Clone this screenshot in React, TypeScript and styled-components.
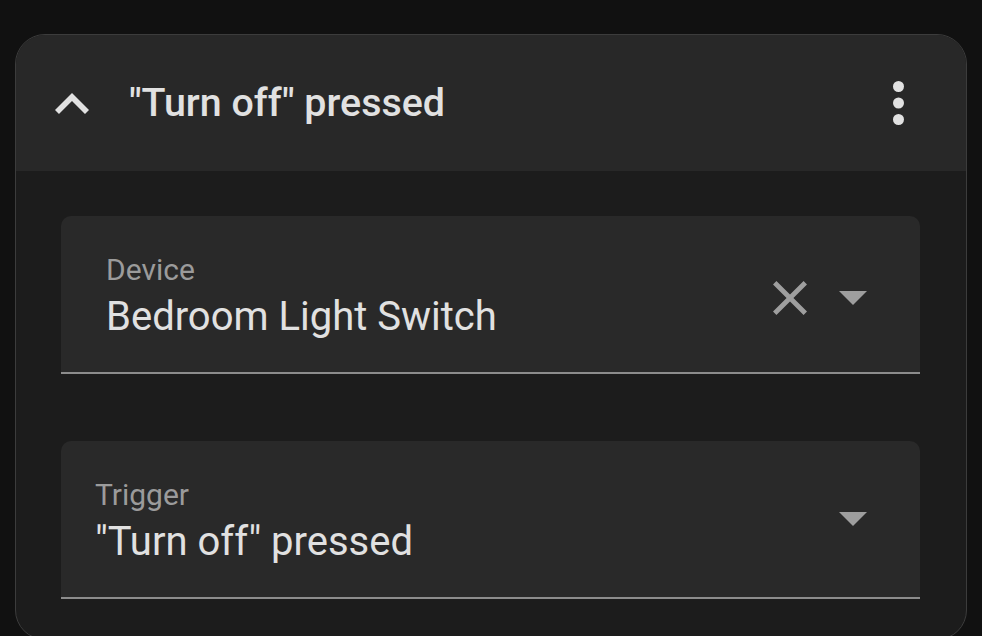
import React from "react";
import styled, { createGlobalStyle } from "styled-components";

const Global = createGlobalStyle`
  html, body {
    margin: 0;
    padding: 0;
    background: #111111;
    font-family: Roboto, "Noto Sans", sans-serif;
    overflow: hidden;
  }
`;

const Page = styled.div`
  width: 982px;
  height: 636px;
  padding: 34px 0 0 15px;
  box-sizing: border-box;
`;

const Card = styled.div`
  width: 952px;
  height: 606px;
  box-sizing: border-box;
  border: 1px solid #3c3c3c;
  border-radius: 30px;
  background: #1c1c1c;
  overflow: hidden;
  display: flex;
  flex-direction: column;
`;

const Header = styled.div`
  height: 136px;
  flex: none;
  background: #282828;
  display: flex;
  align-items: center;
  padding: 0 62px 0 39px;
`;

const Chevron = styled.svg`
  width: 34px;
  height: 21px;
  flex: none;
  fill: #e1e1e1;
`;

const Title = styled.div`
  flex: 1;
  margin-left: 40px;
  font-size: 39.4px;
  font-weight: 500;
  color: #e1e1e1;
  line-height: 1;
`;

const Dots = styled.svg`
  width: 11px;
  height: 44px;
  flex: none;
  fill: #e1e1e1;
`;

const Body = styled.div`
  padding: 45px 46px 0 45px;
  display: flex;
  flex-direction: column;
  gap: 67px;
`;

const Field = styled.div<{ $pad: number }>`
  height: 158px;
  box-sizing: border-box;
  background: #292929;
  border-radius: 10px 10px 0 0;
  border-bottom: 2px solid #8c8c8c;
  display: flex;
  align-items: center;
  padding: 0 53px 0 ${(p) => p.$pad}px;
`;

const TextCol = styled.div`
  flex: 1;
  align-self: flex-start;
  padding-top: 39px;
  display: flex;
  flex-direction: column;
  gap: 12px;
`;

const Label = styled.div`
  font-size: 30px;
  line-height: 1;
  color: #9b9b9b;
`;

const Value = styled.div`
  font-size: 40px;
  line-height: 1;
  color: #e1e1e1;
`;

const Icons = styled.div<{ $shift: number }>`
  display: flex;
  align-items: center;
  gap: 32px;
  margin-top: ${(p) => p.$shift}px;
`;

const ClearIcon = styled.svg`
  width: 34px;
  height: 34px;
  fill: #9e9e9e;
`;

const DropIcon = styled.svg`
  width: 28px;
  height: 14px;
  fill: #9e9e9e;
`;

const ChevronUp = () => (
  <Chevron viewBox="6 8 12 7.41">
    <path d="M7.41,15.41L12,10.83L16.59,15.41L18,14L12,8L6,14L7.41,15.41Z" />
  </Chevron>
);

const Kebab = () => (
  <Dots viewBox="10 4 4 16">
    <circle cx="12" cy="6" r="2" />
    <circle cx="12" cy="12" r="2" />
    <circle cx="12" cy="18" r="2" />
  </Dots>
);

const Clear = () => (
  <ClearIcon viewBox="5 5 14 14">
    <path d="M19,6.41L17.59,5L12,10.59L6.41,5L5,6.41L10.59,12L5,17.59L6.41,19L12,13.41L17.59,19L19,17.59L13.41,12L19,6.41Z" />
  </ClearIcon>
);

const Drop = () => (
  <DropIcon viewBox="7 10 10 5">
    <path d="M7,10L12,15L17,10H7Z" />
  </DropIcon>
);

export default function App() {
  return (
    <>
      <Global />
      <Page>
        <Card>
          <Header>
            <ChevronUp />
            <Title>"Turn off" pressed</Title>
            <Kebab />
          </Header>
          <Body>
            <Field $pad={45}>
              <TextCol>
                <Label>Device</Label>
                <Value>Bedroom Light Switch</Value>
              </TextCol>
              <Icons $shift={8}>
                <Clear />
                <Drop />
              </Icons>
            </Field>
            <Field $pad={34}>
              <TextCol>
                <Label>Trigger</Label>
                <Value>"Turn off" pressed</Value>
              </TextCol>
              <Icons $shift={0}>
                <Drop />
              </Icons>
            </Field>
          </Body>
        </Card>
      </Page>
    </>
  );
}
